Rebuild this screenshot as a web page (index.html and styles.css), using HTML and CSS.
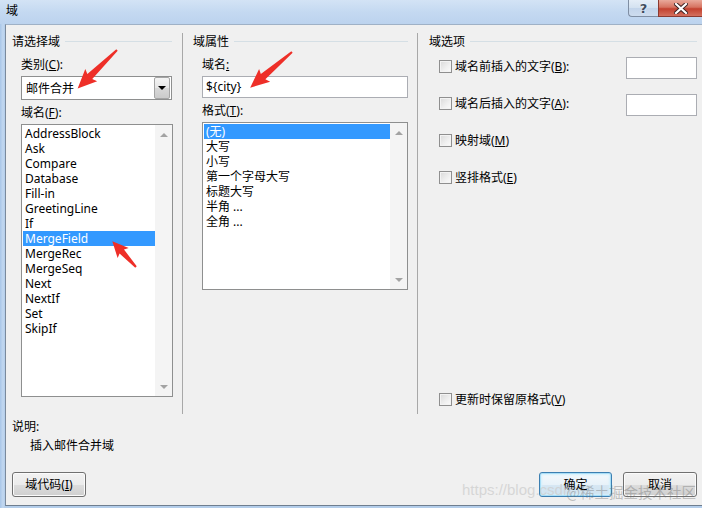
FILE: index.html
```html
<!DOCTYPE html>
<html lang="zh-CN">
<head>
<meta charset="utf-8">
<title>域</title>
<link rel="stylesheet" href="styles.css">
</head>
<body>
<div class="window">
  <div class="titlebar">
    <span class="title">域</span>
    <div class="caption-btns">
      <div class="cap-btn cap-help">?</div>
      <div class="cap-btn cap-close">
        <svg width="14" height="11" viewBox="0 0 14 11"><path d="M2 1 L12 10 M12 1 L2 10" stroke="#3a2020" stroke-width="4" stroke-linecap="square"/><path d="M2 1 L12 10 M12 1 L2 10" stroke="#fff" stroke-width="2.2" stroke-linecap="square"/></svg>
      </div>
    </div>
  </div>
  <div class="client">
    <div class="groups">
      <section class="group g-left">
        <div class="group-head"><span>请选择域</span><i class="rule"></i></div>
        <div class="group-body">
          <div class="field-label">类别(<u>C</u>):</div>
          <div class="combo">
            <span class="combo-text">邮件合并</span>
            <span class="combo-btn"><i class="tri-down"></i></span>
          </div>
          <div class="field-label gap5">域名(<u>F</u>):</div>
          <div class="listbox list-left">
            <ul class="items">
              <li>AddressBlock</li>
              <li>Ask</li>
              <li>Compare</li>
              <li>Database</li>
              <li>Fill-in</li>
              <li>GreetingLine</li>
              <li>If</li>
              <li class="sel">MergeField</li>
              <li>MergeRec</li>
              <li>MergeSeq</li>
              <li>Next</li>
              <li>NextIf</li>
              <li>Set</li>
              <li>SkipIf</li>
            </ul>
            <div class="scrollbar"><i class="sb-up"></i><i class="sb-down"></i></div>
          </div>
        </div>
      </section>
      <section class="group g-mid">
        <div class="group-head"><span>域属性</span><i class="rule"></i></div>
        <div class="group-body">
          <div class="field-label">域名<u>:</u></div>
          <div class="textbox">${city}</div>
          <div class="field-label gap5">格式(<u>T</u>):</div>
          <div class="listbox list-mid">
            <ul class="items">
              <li class="sel">(无)</li>
              <li>大写</li>
              <li>小写</li>
              <li>第一个字母大写</li>
              <li>标题大写</li>
              <li>半角 ...</li>
              <li>全角 ...</li>
            </ul>
            <div class="scrollbar"><i class="sb-up"></i><i class="sb-down"></i></div>
          </div>
        </div>
      </section>
      <section class="group g-right">
        <div class="group-head"><span>域选项</span><i class="rule"></i></div>
        <div class="group-body options">
          <div class="opt-row"><i class="check"></i><span class="opt-text">域名前插入的文字(<u>B</u>):</span><span class="small-input"></span></div>
          <div class="opt-row"><i class="check"></i><span class="opt-text">域名后插入的文字(<u>A</u>):</span><span class="small-input"></span></div>
          <div class="opt-row"><i class="check"></i><span class="opt-text">映射域(<u>M</u>)</span></div>
          <div class="opt-row"><i class="check"></i><span class="opt-text">竖排格式(<u>E</u>)</span></div>
          <div class="opt-row opt-last"><i class="check"></i><span class="opt-text">更新时保留原格式(<u>V</u>)</span></div>
        </div>
      </section>
    </div>
    <div class="desc">
      <div class="desc-label">说明:</div>
      <div class="desc-text">插入邮件合并域</div>
    </div>
    <div class="button-row">
      <button class="btn">域代码(<u>I</u>)</button>
      <div class="btn-group">
        <button class="btn btn-default">确定</button>
        <button class="btn">取消</button>
      </div>
    </div>
  </div>
  <svg class="annotations" width="702" height="508" viewBox="0 0 702 508">
    <g fill="#ee2f28">
      <polygon transform="translate(117 50) rotate(135.7)" points="0,-1 38,-3.5 36,-8.5 55,0 36,8.5 38,3.5 0,1"/>
      <polygon transform="translate(292 52) rotate(139.5)" points="0,-1 38,-3.5 36,-8.5 55,0 36,8.5 38,3.5 0,1"/>
      <polygon transform="translate(136 267) rotate(-132.6)" points="0,-1 21,-3 19,-7.5 35,0 19,7.5 21,3 0,1"/>
    </g>
  </svg>
  <div class="watermark"><span class="wm-url">https://blog.csdn</span><span class="wm-brand">@稀土掘金技术社区</span></div>
</div>
</body>
</html>
```

FILE: styles.css
```css
* { box-sizing: border-box; }

html, body {
  margin: 0;
  padding: 0;
  background: #b9d1ea;
}

body {
  font-family: "Noto Sans", "Noto Sans CJK SC", sans-serif;
  font-size: 12px;
  line-height: 15px;
  color: #000;
}

u { text-decoration: underline; text-underline-offset: 1px; }

ul { list-style: none; margin: 0; padding: 0; }

.window {
  position: relative;
  width: 702px;
  height: 508px;
  overflow: hidden;
  background: linear-gradient(90deg, #a9c6e8 0, #c3d8f0 3px, #b3cdea 5px);
  display: flex;
  flex-direction: column;
}

/* title bar */
.titlebar {
  height: 24px;
  flex: none;
  display: flex;
  align-items: flex-start;
  background: linear-gradient(180deg, #d3e3f5 0%, #c4d9f1 50%, #bcd3ee 100%);
}

.title {
  padding: 3px 0 0 6px;
  font-size: 12px;
  line-height: 15px;
}

.caption-btns {
  margin-left: auto;
  display: flex;
}

.cap-btn {
  height: 17px;
  display: flex;
  align-items: center;
  justify-content: center;
  border: 1px solid #7f8ea3;
  border-top: none;
}

.cap-help {
  width: 30px;
  border-right: none;
  border-radius: 0 0 0 4px;
  background: linear-gradient(180deg, #e4edf7 0%, #d3e1f0 50%, #c2d4ea 51%, #cddcee 100%);
  color: #3f4c5e;
  font-family: "DejaVu Sans", sans-serif;
  font-weight: bold;
  font-size: 13px;
  text-shadow: 0 0 2px #fff;
}

.cap-close {
  width: 44px;
  border-color: #8b3a30;
  border-right: none;
  background: linear-gradient(180deg, #e9a99b 0%, #d67361 45%, #c3412f 55%, #d4705f 100%);
}

/* client */
.client {
  flex: 1;
  margin-left: 5px;
  margin-bottom: 2px;
  background: #f0f0f0;
  border-left: 1px solid #7b8a9c;
  border-top: 1px solid #9fb1c6;
  border-bottom: 1px solid #6f7e8f;
  display: flex;
  flex-direction: column;
}

.groups {
  margin-top: 8px;
  height: 381px;
  display: flex;
}

.group {
  display: flex;
  flex-direction: column;
}

.g-left {
  width: 177px;
  border-right: 1px solid #a8a8a8;
}

.g-mid {
  width: 235px;
  border-right: 1px solid #a8a8a8;
}

.g-right {
  flex: 1;
}

.group-head {
  margin-top: 1px;
  height: 15px;
  display: flex;
  align-items: center;
}

.g-left .group-head { padding: 0 10px 0 6px; }
.g-mid .group-head { padding: 0 9px 0 10px; }
.g-right .group-head { padding: 0 5px 0 11px; }

.rule {
  flex: 1;
  height: 1px;
  margin-left: 5px;
  background: #d5dfe5;
}

.g-left .group-body { padding: 0 10px 0 15px; }
.g-mid .group-body { padding: 0 9px 0 19px; }

.field-label {
  margin-top: 8px;
  line-height: 15px;
}

.field-label.gap5 { margin-top: 5px; }

/* combo */
.combo {
  margin-top: 4px;
  height: 24px;
  border: 1px solid #8e8f8f;
  background: #fff;
  display: flex;
  align-items: center;
}

.combo-text {
  flex: 1;
  padding-left: 4px;
}

.combo-btn {
  width: 16px;
  height: 22px;
  margin-right: 1px;
  border: 1px solid #a5a5a5;
  border-radius: 2px;
  background: linear-gradient(180deg, #f4f4f4 0%, #e6e6e6 50%, #d8d8d8 51%, #cbcbcb 100%);
  display: flex;
  align-items: center;
  justify-content: center;
}

.tri-down {
  width: 0;
  height: 0;
  border-left: 4px solid transparent;
  border-right: 4px solid transparent;
  border-top: 4px solid #000;
}

/* text box */
.textbox {
  margin-top: 4px;
  height: 22px;
  border: 1px solid #abadb3;
  background: #fff;
  padding-left: 3px;
  line-height: 20px;
}

/* list boxes */
.listbox {
  margin-top: 4px;
  border: 1px solid #8e8f8f;
  background: #fff;
  display: flex;
  padding-left: 1px;
}

.list-left { height: 273px; margin-right: -1px; }
.list-mid { height: 168px; }

.items {
  flex: 1;
  padding-top: 1px;
}

.items li {
  height: 15px;
  line-height: 15px;
  padding-left: 2px;
  white-space: nowrap;
}

.items li.sel {
  background: #3399ff;
  color: #fff;
}

.scrollbar {
  width: 17px;
  background: #f4f4f4;
  display: flex;
  flex-direction: column;
  justify-content: space-between;
  align-items: center;
  padding: 8px 0 7px;
}

.sb-up, .sb-down {
  width: 0;
  height: 0;
  border-left: 4px solid transparent;
  border-right: 4px solid transparent;
}

.sb-up { border-bottom: 4px solid #a3a3a3; }
.sb-down { border-top: 4px solid #a3a3a3; }

/* options */
.options {
  flex: 1;
  display: flex;
  flex-direction: column;
  gap: 15px;
  padding: 8px 5px 2px 21px;
}

.opt-row {
  height: 22px;
  display: flex;
  align-items: flex-start;
}

.opt-last { margin-top: auto; }

.check {
  width: 13px;
  height: 13px;
  margin: 3px 3px 0 0;
  border: 1px solid #8f8f8f;
  background: linear-gradient(135deg, #d9d9d9 0%, #f0f0f0 60%, #fbfbfb 100%);
  box-shadow: inset 0 0 0 1px #f3f3f3;
}

.opt-text {
  margin-top: 2px;
}

.small-input {
  margin-left: auto;
  width: 71px;
  height: 22px;
  border: 1px solid #abadb3;
  background: #fff;
}

/* description */
.desc {
  margin-top: 5px;
  padding-left: 6px;
}

.desc-text {
  margin-top: 4px;
  padding-left: 18px;
}

/* buttons */
.button-row {
  margin-top: auto;
  display: flex;
  justify-content: space-between;
  padding: 0 5px 8px 6px;
}

.btn-group {
  display: flex;
  gap: 11px;
}

.btn {
  width: 74px;
  height: 25px;
  padding: 0;
  font: inherit;
  color: #000;
  border: 1px solid #707070;
  border-radius: 3px;
  background: linear-gradient(180deg, #f2f2f2 0%, #ebebeb 50%, #dddddd 51%, #cfcfcf 100%);
  box-shadow: inset 0 0 0 1px #fbfbfb;
}

.btn-default {
  width: 73px;
  border-color: #3c7fb1;
  background: linear-gradient(180deg, #f4f9fc 0%, #e8f2f9 50%, #d7e7f3 51%, #cfe2f0 100%);
  box-shadow: inset 0 0 0 1px #a8def7, inset 0 0 2px 2px #d4f0fc;
}

/* overlays */
.annotations {
  position: absolute;
  left: 0;
  top: 0;
  pointer-events: none;
}

.watermark {
  position: absolute;
  left: 462px;
  top: 481px;
  display: flex;
  align-items: baseline;
  pointer-events: none;
  white-space: nowrap;
}

.wm-url {
  font-family: "Liberation Sans", sans-serif;
  font-size: 15px;
  color: rgba(205, 205, 205, 0.75);
}

.wm-brand {
  font-family: "Noto Sans CJK SC", sans-serif;
  font-size: 14.5px;
  color: rgba(110, 110, 110, 0.4);
  position: relative;
  top: 3px;
  margin-left: -5px;
}
```
